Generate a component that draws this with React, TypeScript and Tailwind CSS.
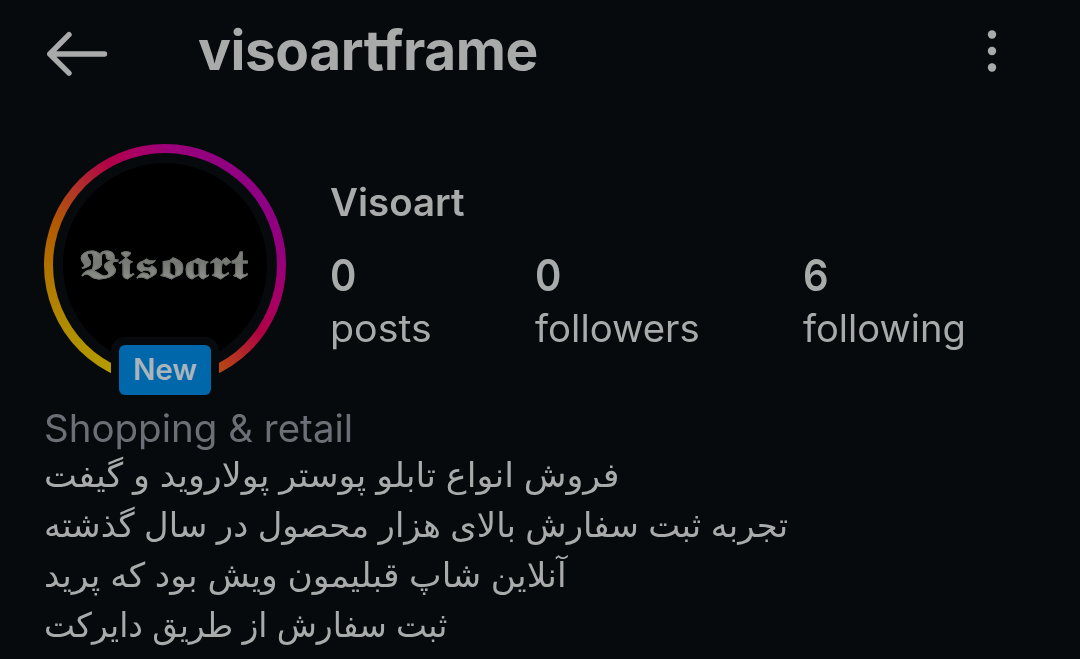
const stats = [
  { label: 'posts', value: '0', column: 'w-[205px]', stretch: 'scale-x-[1.035]' },
  { label: 'followers', value: '0', column: 'w-[268px]', stretch: 'scale-x-[1.01]' },
  { label: 'following', value: '6', column: 'w-[180px]', stretch: 'scale-x-[1.003]' },
];

const bio = [
  { text: 'فروش انواع تابلو پوستر پولاروید و گیفت', stretch: 'scale-x-[1.029]' },
  { text: 'تجربه ثبت سفارش بالای هزار محصول در سال گذشته', stretch: 'scale-x-[0.995]' },
  { text: 'آنلاین شاپ قبلیمون ویش بود که پرید', stretch: 'scale-x-[1.016]' },
  { text: 'ثبت سفارش از طریق دایرکت', stretch: 'scale-x-[0.967]' },
];

function Header() {
  return (
    <header className="flex h-[104px] items-start pl-[46px]">
      <svg className="mt-[31px] h-[46px] w-[62px] shrink-0" viewBox="0 0 62 46" fill="none" stroke="#a9abab" strokeWidth="5.4" strokeLinecap="round" strokeLinejoin="round">
        <path d="M23 3.7 3.8 23 23 42.2M3.8 23H58.5" />
      </svg>
      <h1 className="ml-[90px] mt-[10px] w-[788px] text-[55px] font-bold leading-[80px] tracking-[-0.45px] [font-variant-ligatures:none]">visoartframe</h1>
      <svg className="mt-[28px] h-[46px] w-[12px] shrink-0" viewBox="0 0 12 46" fill="#a9abab">
        <circle cx="6" cy="6.5" r="4.2" />
        <circle cx="6" cy="23" r="4.2" />
        <circle cx="6" cy="39.5" r="4.2" />
      </svg>
    </header>
  );
}

function Avatar() {
  return (
    <div className="relative size-[242px] shrink-0">
      {/* Story ring */}
      <div className="size-full rounded-full bg-[conic-gradient(#9c0078_0deg,#91007f_25deg,#8e0084_60deg,#98007a_90deg,#a80062_110deg,#b00044_125deg,#b32a28_140deg,#b84d10_155deg,#b87000_180deg,#b59a00_207deg,#b08c00_238deg,#b07600_265deg,#b35a00_290deg,#b23428_310deg,#b00048_332deg,#a80068_348deg,#9c0078_360deg)] p-[9px]">
        <div className="size-full rounded-full bg-[#060a0d] p-[10px]">
          <div className="flex size-full items-center justify-center rounded-full bg-black">
            <span className="mr-[3px] scale-x-[1.37] bg-[linear-gradient(#8b8e89,#747772_45%,#969993)] bg-clip-text text-[40px] leading-none text-transparent blur-[0.5px] [-webkit-text-stroke:0.8px_#70736e]">𝖁𝖎𝖘𝖔𝖆𝖗𝖙</span>
          </div>
        </div>
      </div>
      <span className="absolute left-[67px] top-[193px] flex h-[66px] w-[108px] items-center justify-center rounded-t-[14px] border-8 border-[#060a0d] bg-[#060a0d]">
        <span className="flex h-[50px] w-[92px] shrink-0 items-center justify-center rounded-[6px] bg-[#0067ab] text-[29.5px] font-semibold leading-none text-[#a9b4bc]">New</span>
      </span>
    </div>
  );
}

export default function App() {
  return (
    <main className="h-[659px] w-[1080px] overflow-hidden bg-[#060a0d] font-['Inter','DejaVu_Sans',sans-serif] text-[#a9abab]">
      <Header />
      <section className="flex h-[299px] pl-[44px] pt-[40px]">
        <Avatar />
        <div className="ml-[44px] pt-[34px]">
          <h2 className="w-fit origin-left scale-x-[1.012] text-[38px] font-semibold leading-[48px]">Visoart</h2>
          <div className="mt-[21px] flex">
            {stats.map((stat) => (
              <div key={stat.label} className={stat.column}>
                <p className="w-fit origin-left scale-x-[0.91] text-[44px] font-semibold leading-[56px]">{stat.value}</p>
                <p className={`w-fit origin-left text-[38px] leading-[50px] ${stat.stretch}`}>{stat.label}</p>
              </div>
            ))}
          </div>
        </div>
      </section>
      <section className="pl-[44px]">
        <p className="h-[47px] w-fit origin-left scale-x-[1.013] text-[38px] leading-[50px] text-[#6c7076]">Shopping &amp; retail</p>
        {bio.map((line) => (
          <p key={line.text} dir="rtl" className={`w-fit origin-left whitespace-nowrap text-[34px] leading-[50px] ${line.stretch}`}>
            {line.text}
          </p>
        ))}
      </section>
    </main>
  );
}
